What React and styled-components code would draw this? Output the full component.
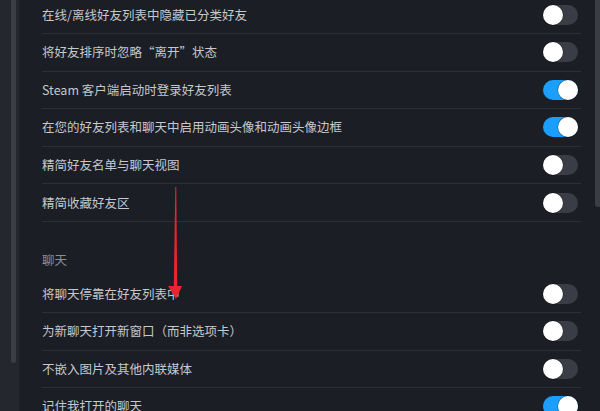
import React from "react";
import styled, { createGlobalStyle } from "styled-components";

const Global = createGlobalStyle`
  html, body { margin: 0; padding: 0; background: #1b1e25; }
  body { width: 600px; height: 411px; overflow: hidden; font-family: "Noto Sans CJK SC", "Noto Sans", sans-serif; }
`;

const Frame = styled.div`
  position: relative;
  display: flex;
  width: 600px;
  height: 411px;
  overflow: hidden;
  background: #1b1e25;
`;

const LeftRail = styled.div`
  width: 19px;
  flex: none;
  background: #24272e;
  border-right: 1px solid #1f2228;
  position: relative;
`;

const RailThumb = styled.div`
  position: absolute;
  left: 11px;
  top: 0;
  width: 5px;
  height: 363px;
  border-radius: 0 0 3px 3px;
  background: #3b3e46;
`;

const Main = styled.div`
  flex: 1;
  padding: 0 14px 0 22px;
`;

const List = styled.div`
  margin-top: -3.6px;
  display: flex;
  flex-direction: column;
`;

const Row = styled.div`
  box-sizing: border-box;
  height: 37.6px;
  flex: none;
  display: flex;
  align-items: center;
  justify-content: space-between;
  border-bottom: 1px solid #2c2f37;
  padding-right: 3px;
`;

const Label = styled.span`
  font-size: 12.5px;
  line-height: 16px;
  color: #c5c8cd;
  letter-spacing: 0;
  white-space: nowrap;
`;

const SectionHeader = styled.div`
  box-sizing: border-box;
  height: 53.4px;
  flex: none;
  display: flex;
  align-items: flex-end;
  padding-bottom: 7.5px;
  font-size: 12.5px;
  line-height: 16px;
  color: #8a8e96;
`;

const Track = styled.div`
  position: relative;
  width: 35px;
  height: 20px;
  border-radius: 10px;
  flex: none;
  background: ${(p) => (p.$on ? "#1a9fff" : "#3a3d45")};
`;

const Knob = styled.div`
  position: absolute;
  top: 0;
  left: ${(p) => (p.$on ? "15px" : "0")};
  width: 20px;
  height: 20px;
  border-radius: 50%;
  background: #ffffff;
  box-shadow: 0 0 0 0.5px rgba(0, 0, 0, 0.5);
`;

const RightBar = styled.div`
  width: 5px;
  flex: none;
  position: relative;
`;

const RightThumb = styled.div`
  position: absolute;
  top: 0;
  left: 0;
  width: 5px;
  height: 207px;
  border-radius: 0 0 0 3px;
  background: #3a3d44;
`;

const Arrow = styled.svg`
  position: absolute;
  left: 160px;
  top: 180px;
  width: 30px;
  height: 125px;
  pointer-events: none;
`;

const Toggle = ({ on }) => (
  <Track $on={on}>
    <Knob $on={on} />
  </Track>
);

const friends = [
  ["在线/离线好友列表中隐藏已分类好友", false],
  ["将好友排序时忽略“离开”状态", false],
  ["Steam 客户端启动时登录好友列表", true],
  ["在您的好友列表和聊天中启用动画头像和动画头像边框", true],
  ["精简好友名单与聊天视图", false],
  ["精简收藏好友区", false],
];

const chat = [
  ["将聊天停靠在好友列表中", false],
  ["为新聊天打开新窗口（而非选项卡）", false],
  ["不嵌入图片及其他内联媒体", false],
  ["记住我打开的聊天", true],
];

export default function App() {
  return (
    <>
      <Global />
      <Frame>
        <LeftRail>
          <RailThumb />
        </LeftRail>
        <Main>
          <List>
            {friends.map(([t, on]) => (
              <Row key={t}>
                <Label>{t}</Label>
                <Toggle on={on} />
              </Row>
            ))}
            <SectionHeader>聊天</SectionHeader>
            {chat.map(([t, on]) => (
              <Row key={t}>
                <Label>{t}</Label>
                <Toggle on={on} />
              </Row>
            ))}
          </List>
        </Main>
        <RightBar>
          <RightThumb />
        </RightBar>
        <Arrow viewBox="0 0 30 125">
          <polygon
            points="15.3,7 16.3,7 17.2,106 22,106 16,119 8,106 13.8,106"
            fill="#e8262b"
          />
        </Arrow>
      </Frame>
    </>
  );
}
